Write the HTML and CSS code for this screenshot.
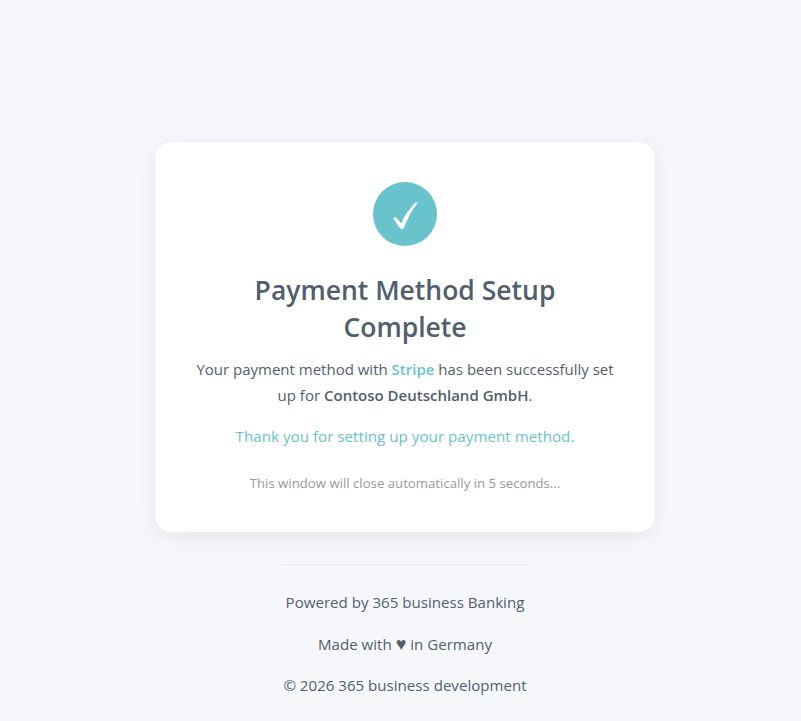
FILE: index.html
```html
<!DOCTYPE html>
<html>
<head>
    <title>Payment Method Setup Complete</title>
    <link rel="stylesheet" href="styles.css">
</head>
<body>
    <div class="card">
        <div class="success-icon">
            <svg width="64" height="64" viewBox="0 0 64 64">
                <path d="M20.2 36.6 L22.6 34.8 L28.2 41.4 C31.8 33 37 26 42.8 20 L44.6 21 C38.4 29 34 37.4 30.6 46.8 L27.4 46.8 Z" fill="#fff"/>
            </svg>
        </div>
        <h1>Payment Method Setup Complete</h1>
        <p class="message">Your payment method with <strong class="accent">Stripe</strong> has been successfully set up for <strong>Contoso Deutschland GmbH</strong>.</p>
        <p class="thanks">Thank you for setting up your payment method.</p>
        <p class="countdown">This window will close automatically in 5 seconds...</p>
    </div>

    <div class="footer">
        <p>Powered by 365 business Banking</p>
        <p>Made with <span class="heart">♥</span> in Germany</p>
        <p>© 2026 365 business development</p>
    </div>
</body>
</html>
```

FILE: styles.css
```css
body {
    margin: 0;
    padding: 142px 0 0 9px;
    display: flex;
    flex-direction: column;
    align-items: center;
    background: #f5f7fb;
    color: #525e6e;
    font-family: "Open Sans", "Noto Sans", sans-serif;
}

.card {
    box-sizing: border-box;
    width: 500px;
    height: 390px;
    padding: 40px;
    background: white;
    border-radius: 16px;
    box-shadow: 0 4px 20px rgba(0, 0, 0, 0.08);
    text-align: center;
}

.success-icon {
    width: 64px;
    height: 64px;
    margin: 0 auto 26px auto;
    border-radius: 50%;
    background: #68c3cc;
}

.success-icon svg {
    display: block;
}

h1 {
    margin: 0 0 10px 0;
    font-size: 26.5px;
    line-height: 37px;
    font-weight: 600;
}

.message {
    margin: 0 0 15px 0;
    font-size: 15px;
    line-height: 26px;
}

.accent {
    color: #68c3cc;
}

.message strong {
    font-weight: 600;
}

.thanks {
    margin: 0 0 23px 0;
    font-size: 15.2px;
    line-height: 26px;
    color: #68c3cc;
}

.countdown {
    margin: 0;
    font-size: 13.2px;
    line-height: 22px;
    color: #999;
}

.footer {
    margin-top: 32px;
    padding: 17px 1px 0 1px;
    border-top: 1px solid #e4e7ec;
    text-align: center;
    font-size: 15.1px;
}

.footer p {
    margin: 0;
    padding: 10px 0;
    line-height: 21.5px;
}

.heart {
    font-size: 18px;
    line-height: 1;
}
```
